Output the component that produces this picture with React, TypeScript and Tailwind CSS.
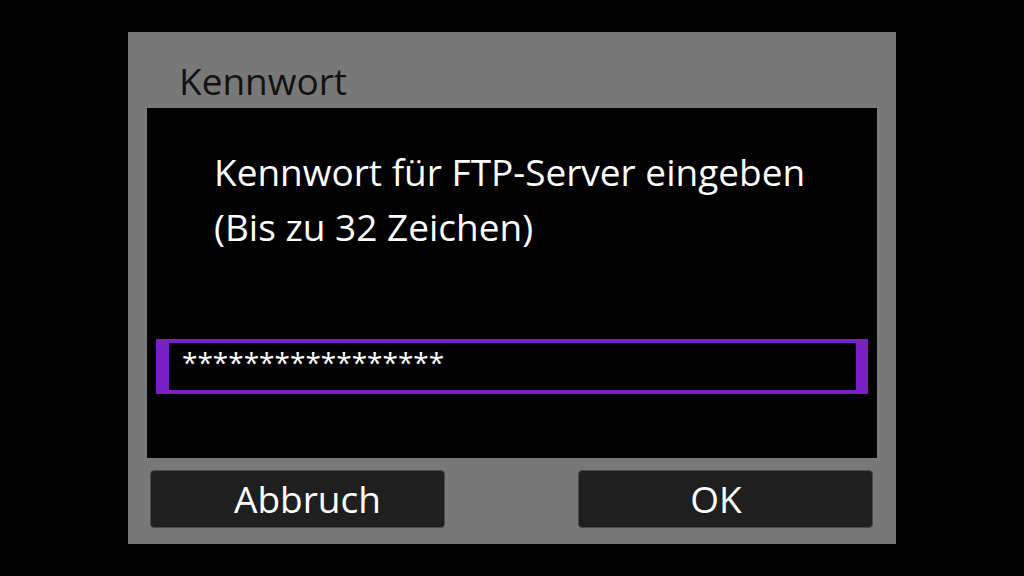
export default function App() {
  return (
    <div className="w-full h-[576px] bg-black flex items-center justify-center font-['Open_Sans',sans-serif]">
      <div className="w-[768px] h-[512px] bg-[#787878] flex flex-col">
        <div className="h-[76px] pt-[29px] pl-[51px] text-[37px] leading-[40px] text-[#121212]">
          Kennwort
        </div>
        <div className="mx-[19px] h-[350px] bg-black flex flex-col">
          <div className="pt-[36px] pl-[67px] text-[37px] leading-[55px] text-white">
            <p>Kennwort für FTP-Server eingeben</p>
            <p>(Bis zu 32 Zeichen)</p>
          </div>
          <div className="mt-auto mb-[64px] mx-[9px] h-[55px] border-[#7a21c6] border-t-4 border-b-4 border-l-[13px] border-r-[12px]">
            <div className="pl-[13px] text-[28px] leading-[38px] text-white">
              *****************
            </div>
          </div>
        </div>
        <div className="flex justify-between pl-[22px] pr-[23px] pt-[12px]">
          <button className="w-[295px] h-[58px] pl-[20px] bg-[#1f1f1f] border border-[#4a4a4a] rounded-[4px] text-white text-[37px] leading-[56px]">
            Abbruch
          </button>
          <button className="w-[295px] h-[58px] pr-[19px] bg-[#1f1f1f] border border-[#4a4a4a] rounded-[4px] text-white text-[37px] leading-[56px]">
            OK
          </button>
        </div>
      </div>
    </div>
  )
}
